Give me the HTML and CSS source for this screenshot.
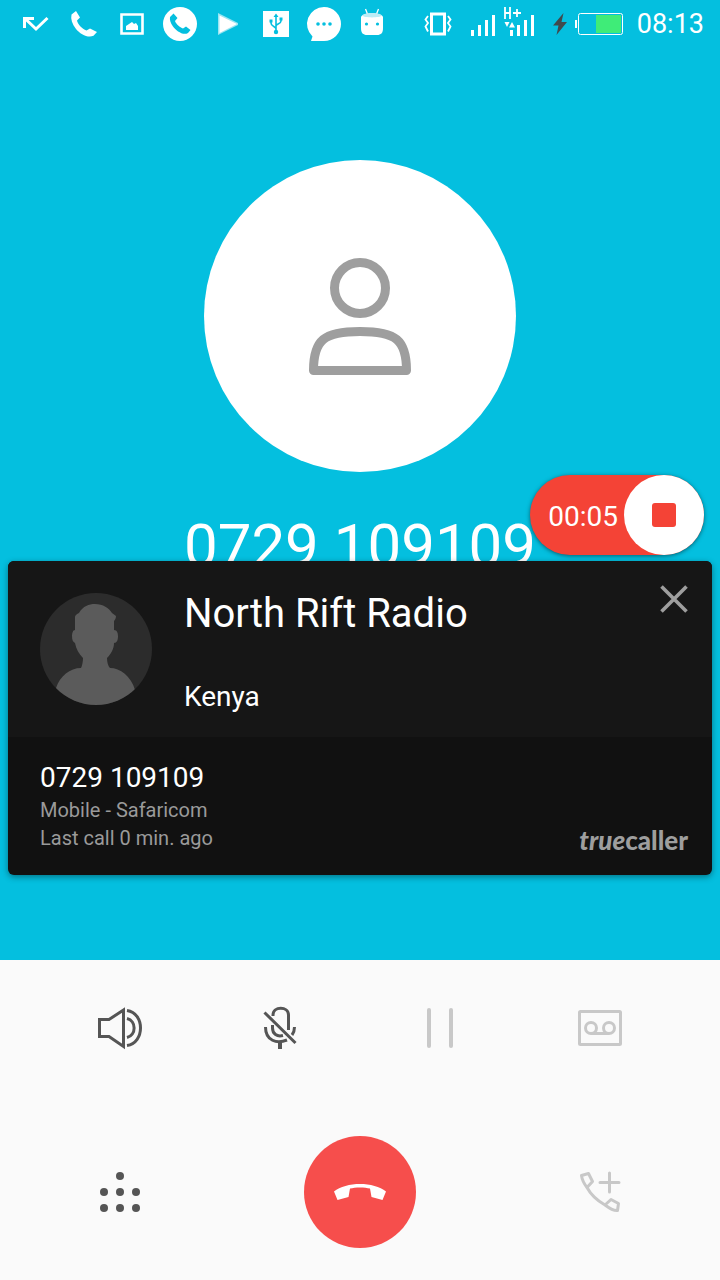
FILE: index.html
```html
<!DOCTYPE html>
<html lang="en">
<head>
<meta charset="utf-8">
<meta name="viewport" content="width=device-width, initial-scale=1">
<title>Call in progress</title>
<link rel="stylesheet" href="styles.css">
</head>
<body>
<main class="screen">
  <header class="status-bar">
    <div class="notifications">
      <svg class="note" viewBox="12 0 48 48"><path d="M24.500 28V18.500H34M25 18.500 36 29 47.500 18" fill="none" stroke="#fff" stroke-width="3"/></svg>
      <svg class="note" viewBox="60 0 48 48"><path d="M71.500 14.500 76 11 80 17.500 77 20.500C77.500 24 82 29 86.500 30.500L90 28.500 97 32 93.500 35.800C88 38.500 80 34 76 29 72 24 70.500 19 71.500 14.500Z" fill="#fff"/></svg>
      <svg class="note" viewBox="108 0 48 48"><path d="M121.500 14.500h21v19h-21z" fill="none" stroke="#fff" stroke-width="2.600"/><path d="M126 30v-4l3-2 3-2 2 2 2-1 2 3v4z" fill="#fff"/></svg>
      <svg class="note" viewBox="156 0 48 48"><circle cx="180" cy="24" r="17" fill="#fff"/><path d="M170 17 173.500 13.500 177.500 18 175 21C176 24 180 27.500 183 28.500L186 26.500 190.500 30 188 33C183 36 176 30.500 173 26.500 170.500 23 169.500 20 170 17Z" fill="#04bfdf"/></svg>
      <svg class="note" viewBox="204 0 48 48"><path d="M218 13 238 23v2L218 35z" fill="#fff" fill-opacity=".6"/><path d="M219.500 15.500 237 24 219.500 33z" fill="#fff"/></svg>
      <svg class="note" viewBox="252 0 48 48"><path d="M263 11h26v26h-26z" fill="#fff"/><g fill="none" stroke="#04bfdf" stroke-width="1.600"><path d="M276 16v16M276 29c0-3-5-2-5-6v-2M276 26c0-2 5-2 5-5v-2"/></g><path d="M276 13.500 278.500 17h-5zM269.500 19.500h3v3h-3zM279.500 17.500h3v3h-3z" fill="#04bfdf"/><circle cx="276" cy="32" r="2.200" fill="#04bfdf"/></svg>
      <svg class="note" viewBox="300 0 48 48"><path d="M324 7a17 17 0 1 1 0 34H311l1.500-4.500A17 17 0 0 1 324 7Z" fill="#fff"/><g fill="#04bfdf"><circle cx="318" cy="24" r="1.800"/><circle cx="324" cy="24" r="1.800"/><circle cx="330" cy="24" r="1.800"/></g></svg>
      <svg class="note" viewBox="348 0 48 48"><path d="M365.500 9 367.500 14M378.500 9 376.500 14" stroke="#fff" stroke-width="1.300"/><path d="M361 17c2-5 20-5 22 0v11c0 5-2 7-6 7h-10c-4 0-6-2-6-7z" fill="#fff"/><path d="M362 15.500c2-3.500 18-3.500 20 0-2 2.500-18 2.500-20 0z" fill="#bcecf5"/><circle cx="366.500" cy="24" r="1.600" fill="#04bfdf"/><circle cx="377.500" cy="24" r="1.600" fill="#04bfdf"/></svg>
    </div>
    <div class="system">
      <svg width="30" height="48" viewBox="423 0 30 48"><path d="M431.500 14h13v20h-13z" fill="none" stroke="#fff" stroke-width="3"/><path d="M428 16 425.500 19.500 428 23 425.500 26.500 428 31.500M448 16 450.500 19.500 448 23 450.500 26.500 448 31.500" fill="none" stroke="#fff" stroke-width="1.800"/></svg>
      <svg width="64" height="48" viewBox="471 0 64 48"><path d="M471 30h3v6h-3zM478 25h3v11h-3zM485 20h3v16h-3zM492 15h3v21h-3zM510 30h3v6h-3zM517 25h3v11h-3zM524 20h3v16h-3zM531 15h3v21h-3zM504.500 22h5l-2.500 5zM509 27.500h6l-3-5.500z" fill="#fff"/><path d="M505 7v12M510 7v12M505 13h5M513 13h8M517 9v8" fill="none" stroke="#fff" stroke-width="1.800"/></svg>
      <svg width="70" height="48" viewBox="553 0 70 48"><path d="M563.500 13 553 25.500H558.500L556.500 35 567 22H561.500z" fill="#404a4d"/><path d="M575 20h2v8h-2z" fill="#fff"/><rect x="578.500" y="13.500" width="44" height="21" rx="2" fill="none" stroke="#fff"/><path d="M596 15h25v18h-25z" fill="#3fec78"/></svg>
      <time class="clock">08:13</time>
    </div>
  </header>

  <section class="caller">
    <svg class="portrait" viewBox="0 0 312 312" role="img" aria-label="Contact"><circle cx="156" cy="156" r="156" fill="#fff"/><g fill="none" stroke="#9e9e9e" stroke-width="9"><circle cx="156" cy="128" r="25.500"/><path d="M109.500 210.500C109.500 180 120 171.500 156 171.500S202.500 180 202.500 210.500Z" stroke-linejoin="round"/></g></svg>
    <h1 class="number">0729 109109</h1>
  </section>

  <button class="recorder" aria-label="Stop recording">
    <span class="elapsed">00:05</span>
    <span class="stop"><span class="stop-mark"></span></span>
  </button>

  <article class="id-card">
    <div class="id-head">
      <svg class="avatar" viewBox="0 0 112 112"><defs><clipPath id="disc"><circle cx="56" cy="56" r="56"/></clipPath></defs><circle cx="56" cy="56" r="56" fill="#2c2c2c"/><path clip-path="url(#disc)" fill="#5b5b5b" d="M35 37V24C35 22 37 21 39 20 43 13 49 11 55 11 63 11 69 15 72 20L76 23C76 25 75 27 74 28L74 37C77 37 78 40 78 43 78 47 77 50 74 50 74 56 71 61 67 65 67 69 68 73 70 75 80 75 91 83 95 97L90 112H22L16 95C20 83 30 75 41 75 42 73 43 69 43 65 39 61 36 56 35 50 33 49 32 47 32 43 32 40 33 37 35 37Z"/></svg>
      <div class="id-text">
        <h2 class="name">North Rift Radio</h2>
        <p class="place">Kenya</p>
      </div>
      <button class="close" aria-label="Close"><svg width="28" height="28" viewBox="0 0 28 28"><path d="M1.500 1.500 26.500 26.500M26.500 1.500 1.500 26.500" stroke="#9e9e9e" stroke-width="3.600"/></svg></button>
    </div>
    <div class="id-foot">
      <div class="details">
        <p class="phone">0729 109109</p>
        <p class="meta">Mobile - Safaricom</p>
        <p class="meta">Last call 0 min. ago</p>
      </div>
      <p class="brand"><em>true</em>caller</p>
    </div>
  </article>

  <section class="controls">
    <div class="row four">
      <button class="control" aria-label="Speaker"><svg width="48" height="48" viewBox="96 1004 48 48" fill="none" stroke="#555" stroke-width="3"><path d="M99.500 1019.500H109L123.500 1010V1046.500L109 1036.500H99.500Z"/><path d="M127 1010.500C145 1013 145 1043 127 1045.500M127 1018.500C136.500 1021 136.500 1035 127 1037.500"/></svg></button>
      <button class="control" aria-label="Mute"><svg width="48" height="48" viewBox="256 1004 48 48" fill="none" stroke="#555" stroke-width="3"><path d="M273 1016V1015C273 1006 288.500 1006 288.500 1015V1030M272.500 1025V1028C272.500 1034 277 1037 283 1035.500M265.500 1027C265.500 1041 277 1044 287 1040M294.500 1027C294.500 1030 293.500 1033 292 1035M264.500 1012.500 295.500 1043"/><path d="M280 1041v8" stroke-width="4"/></svg></button>
      <button class="control" aria-label="Hold" disabled><svg width="48" height="48" viewBox="416 1004 48 48"><path d="M429 1010v36M451 1010v36" stroke="#c8c8c8" stroke-width="4" stroke-linecap="round"/></svg></button>
      <button class="control" aria-label="Record" disabled><svg width="48" height="48" viewBox="576 1004 48 48" fill="none" stroke="#c8c8c8" stroke-width="3"><rect x="579.500" y="1011.500" width="41" height="33" rx="1"/><circle cx="591" cy="1028" r="5.500"/><circle cx="609" cy="1028" r="5.500"/><path d="M591 1033.500h18"/></svg></button>
    </div>
    <div class="row three">
      <button class="control" aria-label="Keypad"><svg width="48" height="48" viewBox="96 1168 48 48" fill="#555"><circle cx="120" cy="1176" r="4"/><circle cx="104" cy="1192" r="4"/><circle cx="120" cy="1192" r="4"/><circle cx="136" cy="1192" r="4"/><circle cx="104" cy="1208" r="4"/><circle cx="120" cy="1208" r="4"/><circle cx="136" cy="1208" r="4"/></svg></button>
      <button class="control hang-up" aria-label="End call"><svg width="56" height="56" viewBox="332 1164 56 56"><path d="M334 1191.500C340 1186.500 350 1184 360 1184S380 1186.500 386 1191.500L382.500 1200 371.500 1197 370 1188.500C365 1187 355 1187 350 1188.500L348.500 1197 337.500 1200Z" fill="#fff"/></svg></button>
      <button class="control" aria-label="Add call" disabled><svg width="48" height="48" viewBox="576 1168 48 48" fill="none" stroke="#c8c8c8" stroke-width="3" stroke-linejoin="round"><path d="M581.500 1175.500 588.500 1173.500 592.500 1181.500 587 1187.500C582 1181 582 1179 581.500 1175.500ZM587 1187.500C591 1195 598 1201 605 1205M605 1205 611 1199.500 618.500 1203.500 617.500 1210.500C613 1211 609 1208 605 1205Z"/><path d="M609.500 1173v19M600 1182.500h19" stroke-linecap="round"/></svg></button>
    </div>
  </section>
</main>
</body>
</html>
```
FILE: styles.css
```css
* { box-sizing: border-box; margin: 0; padding: 0; }

body {
  background: #04bfdf;
  color: #fff;
  font-family: Roboto, "Noto Sans", sans-serif;
}

button {
  border: 0;
  background: none;
  color: inherit;
  font: inherit;
}

svg { display: block; flex: none; }

.screen {
  position: relative;
  display: flex;
  flex-direction: column;
  min-height: 100vh;
}

.status-bar {
  display: flex;
  justify-content: space-between;
  height: 48px;
  padding: 0 16px 0 12px;
}

.notifications { display: flex; }
.note { width: 48px; height: 48px; }

.system {
  display: flex;
  align-items: center;
  gap: 18px;
}

.clock {
  margin-left: -4px;
  font-size: 27px;
  line-height: 50px;
}

.caller {
  display: flex;
  flex: 1;
  flex-direction: column;
  align-items: center;
  padding-top: 112px;
}

.portrait { width: 312px; height: 312px; }

.number {
  margin-top: 38px;
  font-size: 60px;
  font-weight: 400;
  line-height: 72px;
}

.recorder {
  position: absolute;
  top: 475px;
  right: 16px;
  display: flex;
  align-items: center;
  gap: 6px;
  padding-left: 18px;
  border-radius: 40px;
  background: #f44336;
  box-shadow: 0 1px 4px rgba(0, 0, 0, 0.5);
}

.elapsed {
  padding-top: 2px;
  font-size: 28px;
}

.stop {
  display: grid;
  place-items: center;
  width: 80px;
  height: 80px;
  border-radius: 50%;
  background: #fff;
}

.stop-mark {
  width: 24px;
  height: 24px;
  border-radius: 3px;
  background: #f44336;
}

.id-card {
  position: absolute;
  top: 561px;
  right: 8px;
  left: 8px;
  overflow: hidden;
  border-radius: 6px;
  background: #111;
  box-shadow: 0 2px 6px rgba(0, 0, 0, 0.4);
}

.id-head {
  display: flex;
  gap: 32px;
  padding: 32px 24px 22px 32px;
  background: #161616;
}

.avatar { width: 112px; height: 112px; }
.id-text { flex: 1; }

.name {
  margin-top: -3px;
  font-size: 40px;
  font-weight: 400;
  line-height: 48px;
}

.place {
  margin-top: 41px;
  font-size: 28px;
  line-height: 36px;
}

.close {
  align-self: flex-start;
  margin-top: -8px;
}

.id-foot {
  display: flex;
  align-items: flex-end;
  justify-content: space-between;
  padding: 22px 24px 23px 32px;
}

.phone {
  font-size: 28px;
  line-height: 37px;
}

.meta {
  color: #9a9a9a;
  font-size: 20px;
  line-height: 28px;
}

.brand {
  color: #9e9e9e;
  font-family: Lato, sans-serif;
  font-size: 26px;
  font-weight: 900;
  line-height: 24px;
}

.controls {
  display: grid;
  grid-template-rows: 136px 184px;
  background: #fafafa;
}

.row { display: grid; align-items: center; justify-items: center; }
.four { grid-template-columns: repeat(4, 1fr); padding: 0 40px; }
.three { grid-template-columns: repeat(3, 1fr); padding-top: 8px; }

.hang-up {
  display: grid;
  place-items: center;
  width: 112px;
  height: 112px;
  border-radius: 50%;
  background: #f64e4c;
}
```
